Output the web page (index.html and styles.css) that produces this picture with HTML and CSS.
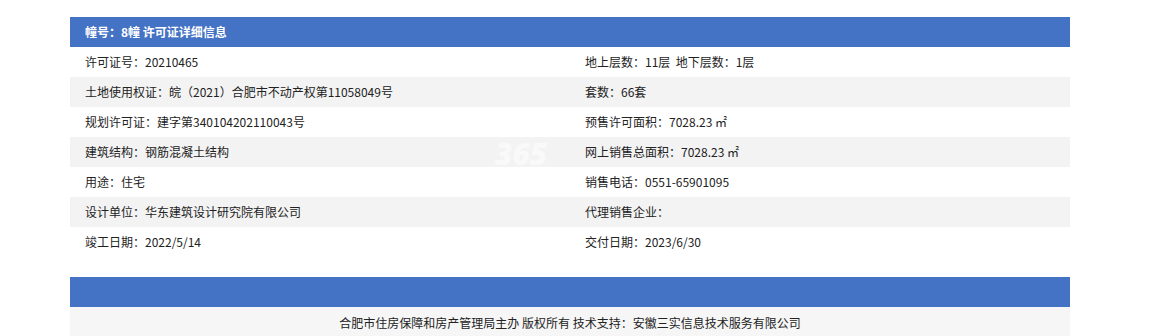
FILE: index.html
```html
<!DOCTYPE html>
<html lang="zh">
<head>
<meta charset="utf-8">
<title>许可证详细信息</title>
<link rel="stylesheet" href="styles.css">
</head>
<body>
<div class="wrap">
  <div class="panel">
    <div class="title">幢号：8幢 许可证详细信息</div>
    <div class="grid">
      <div class="row"><div class="cell">许可证号：20210465</div><div class="cell">地上层数：11层&nbsp;&nbsp;地下层数：1层</div></div>
      <div class="row alt"><div class="cell">土地使用权证：皖（2021）合肥市不动产权第11058049号</div><div class="cell">套数：66套</div></div>
      <div class="row"><div class="cell">规划许可证：建字第340104202110043号</div><div class="cell">预售许可面积：7028.23 ㎡</div></div>
      <div class="row alt"><div class="cell">建筑结构：钢筋混凝土结构</div><div class="cell">网上销售总面积：7028.23 ㎡</div></div>
      <div class="row"><div class="cell">用途：住宅</div><div class="cell">销售电话：0551-65901095</div></div>
      <div class="row alt"><div class="cell">设计单位：华东建筑设计研究院有限公司</div><div class="cell">代理销售企业：</div></div>
      <div class="row"><div class="cell">竣工日期：2022/5/14</div><div class="cell">交付日期：2023/6/30</div></div>
    </div>
    <div class="watermark">365</div>
  </div>
  <div class="bar"></div>
  <div class="footer">合肥市住房保障和房产管理局主办 版权所有 技术支持：安徽三实信息技术服务有限公司</div>
</div>
</body>
</html>
```
FILE: styles.css
```css
html, body {
  margin: 0;
  padding: 0;
  background: #fff;
}
body {
  font-family: "Microsoft YaHei", "Noto Sans CJK SC", "Noto Sans", sans-serif;
  font-size: 12px;
  color: #222;
}
.wrap {
  width: 1000px;
  margin: 17px 0 0 70px;
}
.panel {
  position: relative;
}
.title {
  height: 30px;
  line-height: 30px;
  background: #4472c4;
  color: #fff;
  font-weight: bold;
  padding-left: 15px;
}
.grid {
  display: flex;
  flex-direction: column;
}
.row {
  display: grid;
  grid-template-columns: 500px 500px;
  height: 30px;
  line-height: 30px;
  background: #fff;
}
.row.alt {
  background: #f3f3f3;
}
.cell {
  padding-left: 15px;
  white-space: nowrap;
}
.watermark {
  position: absolute;
  left: 425px;
  top: 122px;
  font-family: "Open Sans", "Noto Sans", sans-serif;
  font-size: 30px;
  line-height: 30px;
  font-weight: 800;
  font-style: italic;
  color: rgba(255, 255, 255, 0.55);
  pointer-events: none;
}
.bar {
  margin-top: 20px;
  height: 30px;
  background: #4472c4;
}
.footer {
  height: 32px;
  line-height: 32px;
  background: #f6f6f6;
  text-align: center;
  color: #222;
}
```
